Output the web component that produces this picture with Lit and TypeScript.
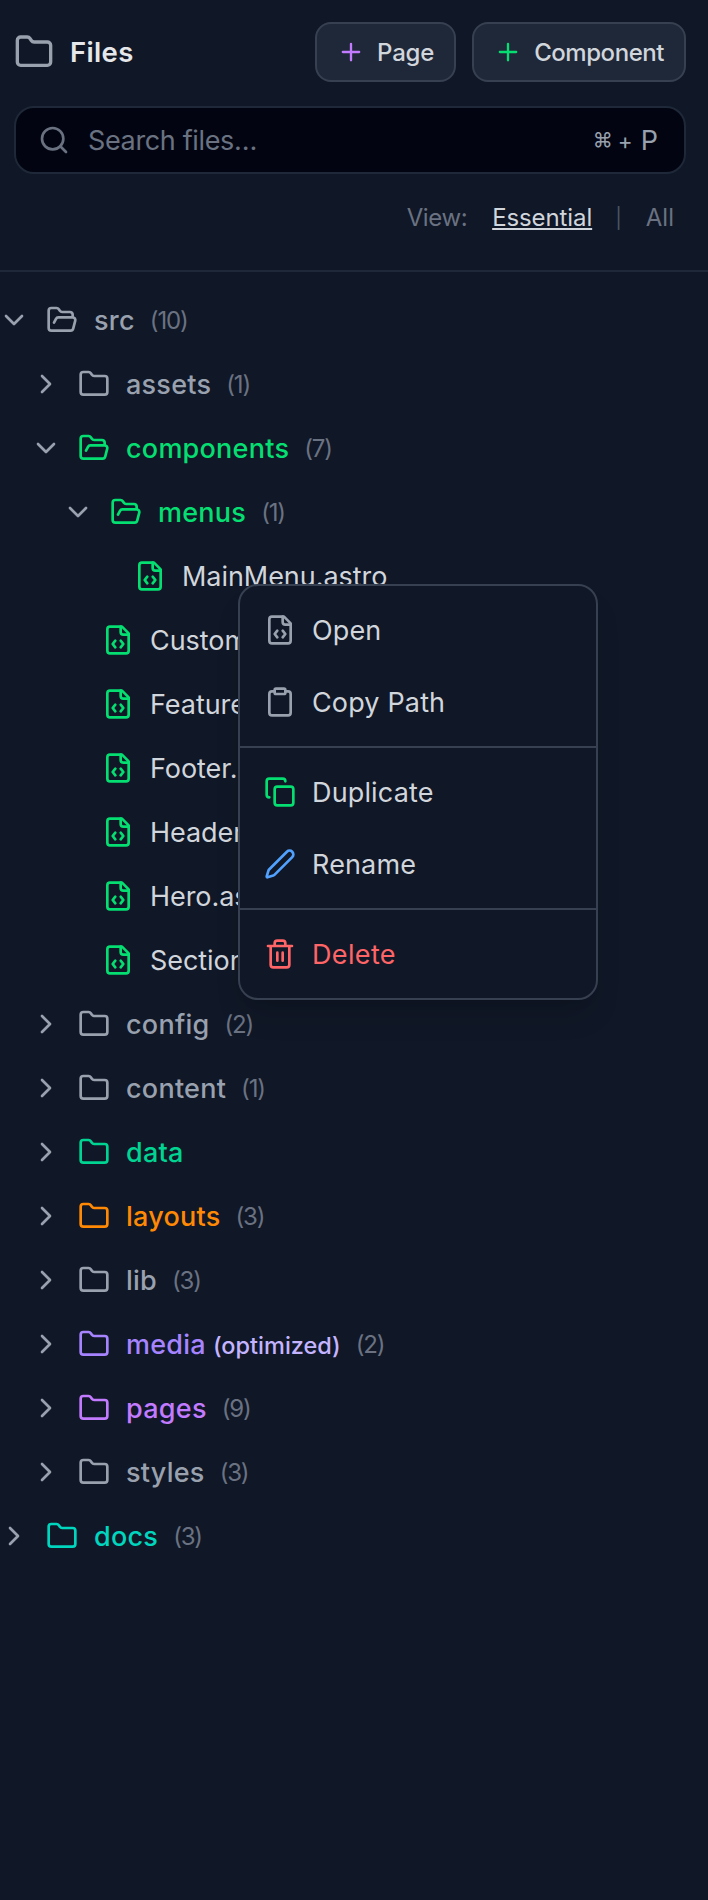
import { LitElement, html, css, svg, nothing } from "lit";
import { customElement } from "lit/decorators.js";

const ICONS: Record<string, unknown> = {
  folder: svg`<path d="M20 20a2 2 0 0 0 2-2V8a2 2 0 0 0-2-2h-7.9a2 2 0 0 1-1.69-.9L9.6 3.9A2 2 0 0 0 7.93 3H4a2 2 0 0 0-2 2v13a2 2 0 0 0 2 2Z"/>`,
  open: svg`<path d="m6 14 1.5-2.9A2 2 0 0 1 9.24 10H20a2 2 0 0 1 1.94 2.5l-1.54 6a2 2 0 0 1-1.95 1.5H4a2 2 0 0 1-2-2V5a2 2 0 0 1 2-2h3.9a2 2 0 0 1 1.69.9l.81 1.2a2 2 0 0 0 1.67.9H18a2 2 0 0 1 2 2v2"/>`,
  down: svg`<path d="m6 9 6 6 6-6"/>`,
  right: svg`<path d="m9 18 6-6-6-6"/>`,
  plus: svg`<path d="M5 12h14M12 5v14"/>`,
  search: svg`<circle cx="11" cy="11" r="8"/><path d="m21 21-4.3-4.3"/>`,
  file: svg`<path d="M15 2H6a2 2 0 0 0-2 2v16a2 2 0 0 0 2 2h12a2 2 0 0 0 2-2V7Z"/><path d="M14 2v4a2 2 0 0 0 2 2h4M10 12.5 8 15l2 2.5M14 12.5l2 2.5-2 2.5"/>`,
  clipboard: svg`<rect width="8" height="4" x="8" y="2" rx="1"/><path d="M16 4h2a2 2 0 0 1 2 2v14a2 2 0 0 1-2 2H6a2 2 0 0 1-2-2V6a2 2 0 0 1 2-2h2"/>`,
  copy: svg`<rect width="14" height="14" x="8" y="8" rx="2"/><path d="M4 16c-1.100 0-2-.9-2-2V4c0-1.100.9-2 2-2h10c1.100 0 2 .9 2 2"/>`,
  pencil: svg`<path d="M21.17 6.81a1 1 0 0 0-3.980-3.980L3.840 16.170a2 2 0 0 0-.5.830l-1.320 4.350a.5.5 0 0 0 .620.620l4.350-1.320a2 2 0 0 0 .830-.5z"/>`,
  trash: svg`<path d="M3 6h18M19 6v14a2 2 0 0 1-2 2H7a2 2 0 0 1-2-2V6M8 6V4a2 2 0 0 1 2-2h4a2 2 0 0 1 2 2v2M10 11v6M14 11v6"/>`,
};

const icon = (name: string, cls = "") =>
  html`<svg class="icon ${cls}" viewBox="0 0 24 24">${ICONS[name]}</svg>`;

interface Node {
  name: string;
  depth: number;
  kind: "open" | "folder" | "file";
  tone?: string;
  count?: number;
  note?: string;
}

const NODES: Node[] = [
  { name: "src", depth: 0, kind: "open", count: 10 },
  { name: "assets", depth: 1, kind: "folder", count: 1 },
  { name: "components", depth: 1, kind: "open", tone: "green", count: 7 },
  { name: "menus", depth: 2, kind: "open", tone: "green", count: 1 },
  { name: "MainMenu.astro", depth: 3, kind: "file" },
  { name: "CustomCard.astro", depth: 2, kind: "file" },
  { name: "Features.astro", depth: 2, kind: "file" },
  { name: "Footer.astro", depth: 2, kind: "file" },
  { name: "Header.astro", depth: 2, kind: "file" },
  { name: "Hero.astro", depth: 2, kind: "file" },
  { name: "Section.astro", depth: 2, kind: "file" },
  { name: "config", depth: 1, kind: "folder", count: 2 },
  { name: "content", depth: 1, kind: "folder", count: 1 },
  { name: "data", depth: 1, kind: "folder", tone: "emerald" },
  { name: "layouts", depth: 1, kind: "folder", tone: "orange", count: 3 },
  { name: "lib", depth: 1, kind: "folder", count: 3 },
  { name: "media", depth: 1, kind: "folder", tone: "violet", count: 2, note: "(optimized)" },
  { name: "pages", depth: 1, kind: "folder", tone: "purple", count: 9 },
  { name: "styles", depth: 1, kind: "folder", count: 3 },
  { name: "docs", depth: 0, kind: "folder", tone: "teal", count: 3 },
];

@customElement("app-root")
export class AppRoot extends LitElement {
  static styles = css`
    :host {
      display: block;
      position: relative;
      box-sizing: border-box;
      height: 1900px;
      overflow: hidden;
      background: #101726;
      color: #d1d5dc;
      font-family: Inter, sans-serif;
      font-size: 27px;
    }
    * { box-sizing: border-box; }
    .icon {
      display: block;
      flex: none;
      width: 32px;
      height: 32px;
      fill: none;
      stroke: currentColor;
      stroke-width: 2;
      stroke-linecap: round;
      stroke-linejoin: round;
    }
    .head {
      height: 272px;
      padding: 22px 22px 0 14px;
      border-bottom: 2px solid #1e2838;
    }
    .bar { display: flex; align-items: center; height: 60px; }
    .bar .title { flex: 1; margin-left: 16px; color: #e5e7eb; font-size: 27.5px; font-weight: 600; letter-spacing: 0.35px; }
    .big { width: 40px; height: 40px; color: #99a1af; }
    .btn {
      display: flex;
      align-items: center;
      height: 60px;
      margin-left: 16px;
      padding: 0 20px;
      border: 2px solid #364050;
      border-radius: 16px;
      background: #1f2838;
      font-size: 24px;
      font-weight: 500;
    }
    .bpage { letter-spacing: -0.2px; }
    .bcomp { letter-spacing: -0.45px; }
    .plus { width: 28px; height: 28px; margin-right: 12px; }
    .search {
      display: flex;
      align-items: center;
      height: 68px;
      margin-top: 24px;
      padding: 0 26px 0 22px;
      border: 2px solid #1e2838;
      border-radius: 20px;
      background: #020511;
      color: #6a7282;
    }
    .search .label { flex: 1; margin-left: 18px; letter-spacing: -0.36px; }
    .keys { display: flex; align-items: center; color: #99a1af; }
    .cmd { font-size: 20px; margin-right: 5px; }
    .add { font-size: 22.5px; margin-right: 8px; }
    .view {
      display: flex;
      justify-content: flex-end;
      align-items: center;
      height: 87px;
      padding-right: 12px;
      font-size: 24px;
      color: #6a7282;
    }
    .v { letter-spacing: -0.4px; }
    .on { margin: 0 23px 0 25px; color: #d1d5dc; letter-spacing: -0.1px; text-decoration: underline; text-decoration-thickness: 2px; text-underline-offset: 2px; }
    .sep { margin-right: 24px; color: #4a5565; font-size: 20px; }
    .tree { padding-top: 16px; }
    .row { display: flex; align-items: center; height: 64px; color: #99a1af; font-weight: 500; }
    .d1 { padding-left: 32px; }
    .d2 { padding-left: 64px; }
    .d3 { padding-left: 96px; }
    .chev { width: 32px; height: 32px; margin: 0 16px 0 -2px; color: #99a1af; }
    .pad { width: 38px; }
    .name { margin-left: 16px; letter-spacing: 0.25px; }
    .file .name { color: #d1d5dc; font-weight: 400; letter-spacing: -0.05px; }
    .note { margin-left: 7px; font-size: 23.5px; letter-spacing: 0; color: #c4b4ff; }
    .count { margin: 0 0 0 15px; font-size: 24px; font-weight: 400; letter-spacing: -1.2px; color: #6a7282; }
    .green, .file { color: #05df72; }
    .emerald { color: #00d492; }
    .orange { color: #ff8904; }
    .violet { color: #a684ff; }
    .purple { color: #c27aff; }
    .teal { color: #00d5be; }
    .blue { color: #51a2ff; }
    .red { color: #ff6467; }
    .mute { color: #99a1af; }
    .lead { display: flex; align-items: center; }
    .menu {
      position: absolute;
      left: 238px;
      top: 584px;
      width: 360px;
      height: 416px;
      border: 2px solid #364050;
      border-radius: 20px;
      background: #101726;
      box-shadow: 0 20px 30px -6px rgba(0, 0, 0, 0.12), 0 8px 12px -8px rgba(0, 0, 0, 0.12);
    }
    .group { padding: 8px 0; }
    .group + .group { border-top: 2px solid #364050; }
    .item { display: flex; align-items: center; height: 72px; padding-left: 24px; }
    .item .text { margin-left: 16px; letter-spacing: 0.15px; }
    .item .text.danger { color: #ff6467; letter-spacing: 0.35px; }
  `;

  private row(n: Node) {
    const file = n.kind === "file";
    return html`<div class="row d${n.depth} ${file ? "file" : ""}">
      ${file ? html`<span class="pad"></span>` : icon(n.kind === "open" ? "down" : "right", "chev")}
      <span class="lead ${n.tone ?? ""}">${icon(n.kind)}<span class="name">${n.name}${n.note
        ? html`<span class="note">${n.note}</span>`
        : nothing}</span></span>
      ${n.count ? html`<span class="count">(${n.count})</span>` : nothing}
    </div>`;
  }

  private item(name: string, tone: string, label: string, cls = "") {
    return html`<div class="item">${icon(name, tone)}<span class="text ${cls}">${label}</span></div>`;
  }

  render() {
    return html`
      <div class="head">
        <div class="bar">
          ${icon("folder", "big")}<span class="title">Files</span>
          <span class="btn">${icon("plus", "plus purple")}<span class="bpage">Page</span></span>
          <span class="btn">${icon("plus", "plus green")}<span class="bcomp">Component</span></span>
        </div>
        <div class="search">
          ${icon("search")}<span class="label">Search files…</span>
          <span class="keys"><span class="cmd">⌘</span><span class="add">+</span><span class="p">P</span></span>
        </div>
        <div class="view">
          <span class="v">View:</span><span class="on">Essential</span><span class="sep">|</span><span class="all">All</span>
        </div>
      </div>
      <div class="tree">${NODES.map((n) => this.row(n))}</div>
      <div class="menu">
        <div class="group">${this.item("file", "mute", "Open")}${this.item("clipboard", "mute", "Copy Path")}</div>
        <div class="group">${this.item("copy", "green", "Duplicate")}${this.item("pencil", "blue", "Rename")}</div>
        <div class="group">${this.item("trash", "red", "Delete", "danger")}</div>
      </div>
    `;
  }
}
